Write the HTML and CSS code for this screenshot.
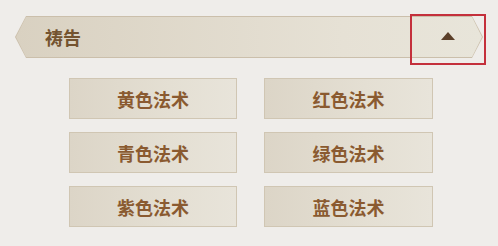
FILE: index.html
```html
<!DOCTYPE html>
<html lang="zh">
<head>
    <meta charset="UTF-8">
    <title>祷告</title>
    <link rel="stylesheet" href="styles.css">
</head>
<body>
    <!-- Section header with collapse toggle -->
    <div class="header-wrap">
        <div class="section-header">
            <div class="section-inner">
                <span class="section-title">祷告</span>
                <span class="toggle-arrow"></span>
            </div>
        </div>
        <!-- red annotation box over the toggle -->
        <div class="highlight-box"></div>
    </div>

    <!-- Spell buttons -->
    <div class="spell-grid">
        <div class="spell-btn">黄色法术</div>
        <div class="spell-btn">红色法术</div>
        <div class="spell-btn">青色法术</div>
        <div class="spell-btn">绿色法术</div>
        <div class="spell-btn">紫色法术</div>
        <div class="spell-btn">蓝色法术</div>
    </div>
</body>
</html>
```

FILE: styles.css
```css
body {
    margin: 0;
    padding: 16px 15px 0 15px;
    background: #efedea;
    font-family: "Noto Sans CJK SC", "Noto Sans", sans-serif;
    width: 498px;
    height: 246px;
    box-sizing: border-box;
    overflow: hidden;
}

.header-wrap {
    position: relative;
    width: 468px;
    height: 42px;
}

/* Header bar with pointed ends */
.section-header {
    position: relative;
    width: 100%;
    height: 100%;
    background: #cbbfab;
    clip-path: polygon(11px 0, 457px 0, 468px 50%, 457px 100%, 11px 100%, 0 50%);
}

.section-inner {
    position: absolute;
    inset: 1px;
    display: flex;
    align-items: center;
    justify-content: space-between;
    background: linear-gradient(to right, #d9d1c1, #e6e1d5 70%, #e8e5da);
    clip-path: polygon(10px 0, 456px 0, 466px 50%, 456px 100%, 10px 100%, 0 50%);
    padding: 0 27px 0 29px;
}

.section-title {
    font-size: 18px;
    font-weight: bold;
    color: #74532f;
    line-height: 1;
    margin-top: -1px;
}

.toggle-arrow {
    width: 0;
    height: 0;
    border-left: 7px solid transparent;
    border-right: 7px solid transparent;
    border-bottom: 8px solid #5b3f29;
    margin-bottom: 2px;
}

.highlight-box {
    position: absolute;
    left: 395px;
    top: -2px;
    width: 76px;
    height: 51px;
    box-sizing: border-box;
    border: 2px solid #c4303c;
}

.spell-grid {
    display: grid;
    grid-template-columns: 168px 169px;
    grid-auto-rows: 41px;
    column-gap: 27px;
    row-gap: 13px;
    margin: 20px 0 0 54px;
}

.spell-btn {
    display: flex;
    align-items: center;
    justify-content: center;
    box-sizing: border-box;
    border: 1px solid #d0c6b3;
    background: linear-gradient(to right, #dcd5c7, #e4dfd3 60%, #e8e4da);
    font-size: 18px;
    font-weight: bold;
    color: #8a5a30;
}
```
